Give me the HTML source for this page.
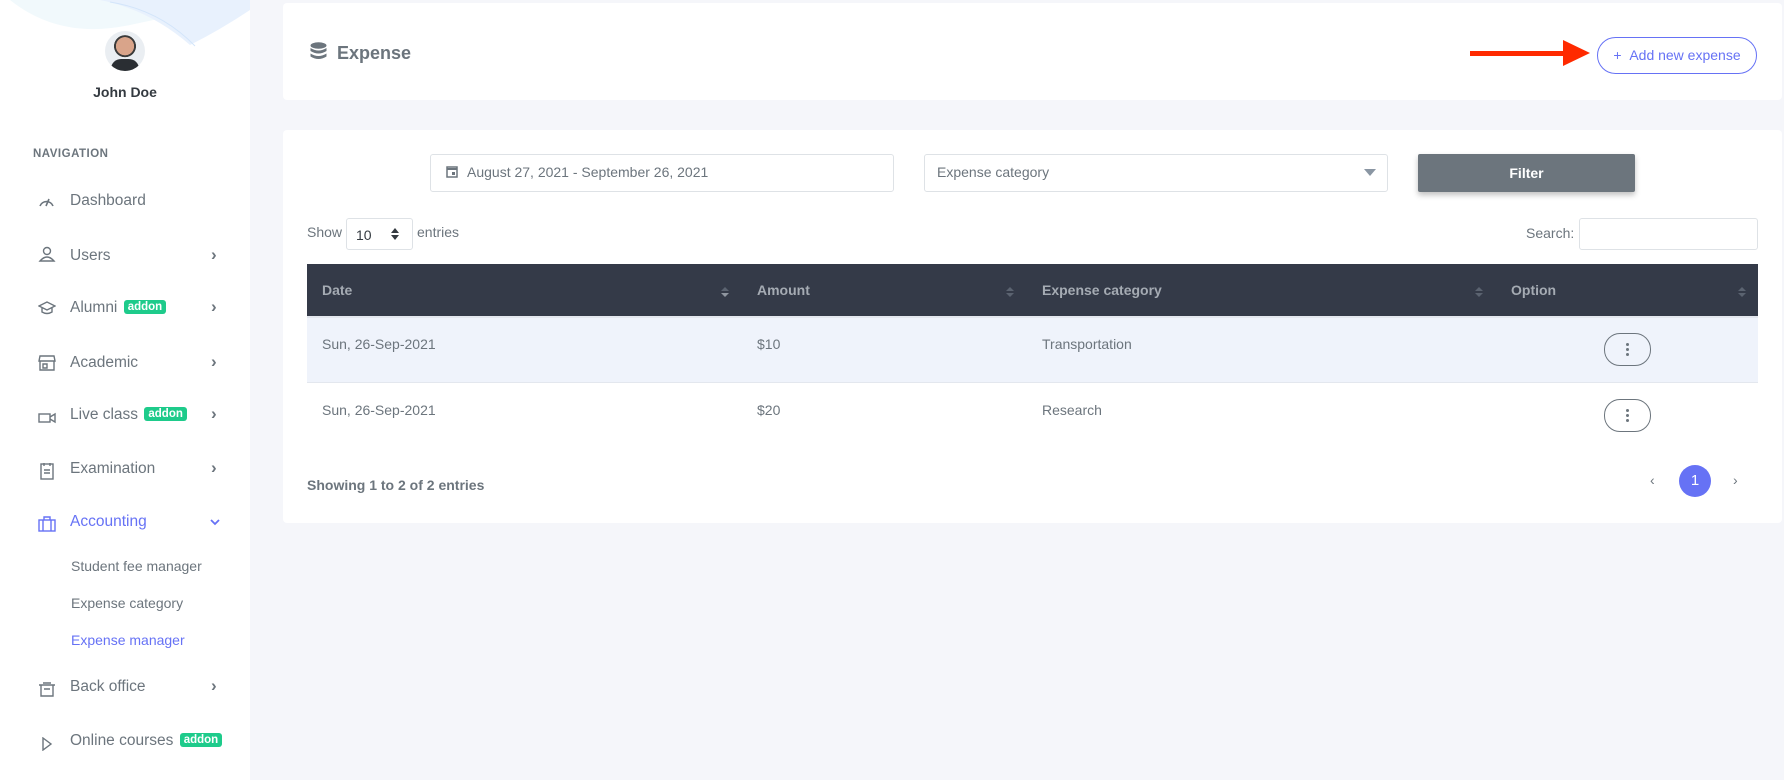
<!DOCTYPE html>
<html><head><meta charset="utf-8">
<style>
*{box-sizing:border-box;margin:0;padding:0}
body{width:1784px;height:776px;background:#f5f6fa;font-family:"Liberation Sans",sans-serif;position:relative;overflow:hidden;color:#6c757d}
.abs{position:absolute}
#side{left:3px;top:3px;width:250px;height:780px;background:#fff;overflow:hidden}
.nav{position:absolute;left:70px;font-size:15.5px;color:#6c757d;white-space:nowrap}
.ic{position:absolute;left:38px}
.chev{position:absolute;left:211px;font-size:17px;font-weight:bold;color:#6c757d}
.badge{display:inline-block;background:#1ecb8b;color:#fff;font-weight:bold;font-size:11.5px;padding:1px 4px;border-radius:3px;vertical-align:2px;margin-left:2px}
.sub{position:absolute;left:71px;font-size:14px;color:#6c757d}
.card{position:absolute;background:#fff;border-radius:4px}
.th{position:absolute;top:282px;font-size:14px;font-weight:bold;color:#a5abb3}
.td{position:absolute;font-size:14px;color:#6c757d}
.sort{position:absolute;top:286px;width:8px;height:12px}
.opt{position:absolute;left:1604px;width:47px;height:33px;border:1px solid #6c757d;border-radius:16px;background:transparent}
.opt i{position:absolute;left:21px;width:3px;height:3px;background:#6c757d;border-radius:50%}
</style></head><body>
<div id="side">
<svg class="abs" style="left:0;top:0" width="250" height="50" viewBox="0 0 250 50">
<path d="M10 0 Q60 40 130 25 T250 0 Z" fill="#f1f9fc"/>
<path d="M100 0 Q150 10 190 45 Q220 30 250 10 L250 0 Z" fill="#e8f1fd"/>
<path d="M110 2 Q160 10 195 46" stroke="#d3e5fa" fill="none"/>
</svg>
<div class="abs" style="left:105px;top:31px;width:40px;height:40px;border-radius:50%;background:radial-gradient(circle at 50% 38%,#d9a48a 0 28%,#3b3b3b 29% 34%,#eaeef2 35%);overflow:hidden"><div style="position:absolute;left:6px;top:28px;width:28px;height:14px;background:#2a2e33;border-radius:10px 10px 0 0"></div></div>
<div class="abs" style="left:0;width:250px;top:84px;text-align:center;font-weight:bold;font-size:14px;color:#343a40">John Doe</div>
<div class="abs" style="left:33px;top:148px;font-size:11.5px;font-weight:bold;letter-spacing:.5px;color:#6c757d">NAVIGATION</div>

<svg class="ic" style="top:194px" width="18" height="14" viewBox="0 0 18 14"><path d="M2 12 A7 7 0 0 1 15 12 M8 12 L11 5" stroke="#6c757d" stroke-width="1.6" fill="none"/></svg>
<div class="nav" style="top:192px">Dashboard</div>

<svg class="ic" style="top:245px" width="18" height="18" viewBox="0 0 18 18"><circle cx="9" cy="6" r="3.5" stroke="#6c757d" stroke-width="1.4" fill="none"/><path d="M2 16 Q9 8 16 16 Z" stroke="#6c757d" stroke-width="1.4" fill="none"/></svg>
<div class="nav" style="top:247px">Users</div><div class="chev" style="top:245px">›</div>

<svg class="ic" style="top:301px" width="18" height="14" viewBox="0 0 18 14"><path d="M1 5 L9 1 L17 5 L9 9 Z M4 7 V11 Q9 14 14 11 V7" stroke="#6c757d" stroke-width="1.4" fill="none"/></svg>
<div class="nav" style="top:299px">Alumni <span class="badge">addon</span></div><div class="chev" style="top:297px">›</div>

<svg class="ic" style="top:355px" width="18" height="16" viewBox="0 0 18 16"><path d="M2 1 H16 L17 6 H1 Z M2 6 V15 H16 V6 M5 9 H9 V13 H5 Z" stroke="#6c757d" stroke-width="1.4" fill="none"/></svg>
<div class="nav" style="top:354px">Academic</div><div class="chev" style="top:352px">›</div>

<svg class="ic" style="top:412px" width="18" height="12" viewBox="0 0 18 12"><rect x="1" y="2" width="11" height="8" stroke="#6c757d" stroke-width="1.4" fill="none"/><path d="M12 5 L17 2 V10 L12 7" stroke="#6c757d" stroke-width="1.4" fill="none"/></svg>
<div class="nav" style="top:406px">Live class <span class="badge">addon</span></div><div class="chev" style="top:404px">›</div>

<svg class="ic" style="top:462px" width="18" height="18" viewBox="0 0 18 18"><rect x="3" y="2" width="12" height="15" stroke="#6c757d" stroke-width="1.4" fill="none"/><path d="M6 1 V4 M12 1 V4 M6 8 H12 M6 11 H12" stroke="#6c757d" stroke-width="1.4"/></svg>
<div class="nav" style="top:460px">Examination</div><div class="chev" style="top:458px">›</div>

<svg class="ic" style="top:516px" width="18" height="16" viewBox="0 0 18 16"><rect x="1" y="4" width="16" height="11" stroke="#6672f5" stroke-width="1.4" fill="none"/><path d="M6 4 V1 H12 V4 M5 4 V15 M13 4 V15" stroke="#6672f5" stroke-width="1.4" fill="none"/></svg>
<div class="nav" style="top:513px;color:#6672f5">Accounting</div>
<svg class="abs" style="left:210px;top:519px" width="10" height="7" viewBox="0 0 10 7"><path d="M1 1 L5 5 L9 1" stroke="#6672f5" stroke-width="1.8" fill="none"/></svg>

<div class="sub" style="top:558px">Student fee manager</div>
<div class="sub" style="top:595px">Expense category</div>
<div class="sub" style="top:632px;color:#6672f5">Expense manager</div>

<svg class="ic" style="top:682px" width="18" height="16" viewBox="0 0 18 16"><path d="M1 3 H17 M3 3 V14 H15 V3 M6 7 H12 M5 1 H13" stroke="#6c757d" stroke-width="1.4" fill="none"/></svg>
<div class="nav" style="top:678px">Back office</div><div class="chev" style="top:676px">›</div>

<svg class="ic" style="top:737px" width="18" height="14" viewBox="0 0 18 14"><path d="M5 1 L13 7 L5 13 Z" stroke="#6c757d" stroke-width="1.4" fill="none"/></svg>
<div class="nav" style="top:732px">Online courses <span class="badge">addon</span></div>
</div>

<div class="card" style="left:283px;top:3px;width:1499px;height:97px"></div>
<svg class="abs" style="left:310px;top:42px" width="17" height="19" viewBox="0 0 17 19"><ellipse cx="8.5" cy="3.5" rx="8" ry="3.2" fill="#6c757d"/><path d="M0.5 6 Q8.5 11 16.5 6 V9 Q8.5 14 0.5 9 Z M0.5 11.5 Q8.5 16.5 16.5 11.5 V14.5 Q8.5 19.5 0.5 14.5 Z" fill="#6c757d"/></svg>
<div class="abs" style="left:337px;top:43px;font-size:18px;font-weight:bold;color:#6c757d">Expense</div>
<div class="abs" style="left:1470px;top:51px;width:95px;height:5px;background:#ff2a00"></div>
<svg class="abs" style="left:1563px;top:40px" width="27" height="26" viewBox="0 0 27 26"><path d="M0 0 L27 13 L0 26 Z" fill="#ff2a00"/></svg>
<div class="abs" style="left:1597px;top:37px;width:160px;height:37px;border:1px solid #6672f5;border-radius:19px;color:#6672f5;font-size:14px;text-align:center;line-height:35px">+ &nbsp;Add new expense</div>

<div class="card" style="left:283px;top:130px;width:1499px;height:393px"></div>
<div class="abs" style="left:430px;top:154px;width:464px;height:38px;border:1px solid #dee2e6;border-radius:3px;background:#fff"></div>
<svg class="abs" style="left:446px;top:165px" width="12" height="13" viewBox="0 0 12 13"><rect x="1" y="2" width="10" height="10" stroke="#6c757d" stroke-width="1.5" fill="none"/><rect x="6" y="7" width="3" height="3" fill="#6c757d"/><path d="M1 4 H11" stroke="#6c757d" stroke-width="2"/></svg>
<div class="abs" style="left:467px;top:164px;font-size:14px;color:#6c757d">August 27, 2021 - September 26, 2021</div>
<div class="abs" style="left:924px;top:154px;width:464px;height:38px;border:1px solid #dee2e6;border-radius:3px;background:#fff"></div>
<div class="abs" style="left:937px;top:164px;font-size:14px;color:#6c757d">Expense category</div>
<svg class="abs" style="left:1364px;top:169px" width="12" height="7"><path d="M0 0 H12 L6 7 Z" fill="#8a96a3"/></svg>
<div class="abs" style="left:1418px;top:154px;width:217px;height:38px;background:#6c757d;border-radius:2px;box-shadow:0 3px 6px rgba(0,0,0,.25);color:#fff;font-weight:bold;font-size:14px;text-align:center;line-height:38px">Filter</div>

<div class="abs" style="left:307px;top:224px;font-size:14px">Show</div>
<div class="abs" style="left:346px;top:218px;width:67px;height:32px;border:1px solid #dee2e6;border-radius:3px;background:#fff;font-size:14px;color:#343a40;padding:8px 0 0 9px">10</div>
<svg class="abs" style="left:391px;top:228px" width="8" height="12"><path d="M0 5 L4 0 L8 5 Z M0 7 L4 12 L8 7 Z" fill="#343a40"/></svg>
<div class="abs" style="left:417px;top:224px;font-size:14px">entries</div>
<div class="abs" style="left:1526px;top:225px;font-size:14px">Search:</div>
<div class="abs" style="left:1579px;top:218px;width:179px;height:32px;border:1px solid #dee2e6;border-radius:3px;background:#fff"></div>

<div class="abs" style="left:307px;top:264px;width:1451px;height:53px;background:#343a48"></div>
<div class="abs" style="left:307px;top:316px;width:1451px;height:2px;background:#e3e7ee"></div>
<div class="abs" style="left:307px;top:318px;width:1451px;height:64px;background:#eff3fb"></div>
<div class="abs" style="left:307px;top:382px;width:1451px;height:1px;background:#e3e7ee"></div>
<div class="th" style="left:322px">Date</div>
<div class="th" style="left:757px">Amount</div>
<div class="th" style="left:1042px">Expense category</div>
<div class="th" style="left:1511px">Option</div>
<svg class="sort" style="left:721px"><path d="M0 5 L4 1 L8 5 Z" fill="#5b6370"/><path d="M0 7 L4 11 L8 7 Z" fill="#8f96a0"/></svg>
<svg class="sort" style="left:1006px"><path d="M0 5 L4 1 L8 5 Z M0 7 L4 11 L8 7 Z" fill="#5b6370"/></svg>
<svg class="sort" style="left:1475px"><path d="M0 5 L4 1 L8 5 Z M0 7 L4 11 L8 7 Z" fill="#5b6370"/></svg>
<svg class="sort" style="left:1738px"><path d="M0 5 L4 1 L8 5 Z M0 7 L4 11 L8 7 Z" fill="#5b6370"/></svg>

<div class="td" style="left:322px;top:336px">Sun, 26-Sep-2021</div>
<div class="td" style="left:757px;top:336px">$10</div>
<div class="td" style="left:1042px;top:336px">Transportation</div>
<div class="opt" style="top:333px"><i style="top:9px"></i><i style="top:14px"></i><i style="top:19px"></i></div>
<div class="td" style="left:322px;top:402px">Sun, 26-Sep-2021</div>
<div class="td" style="left:757px;top:402px">$20</div>
<div class="td" style="left:1042px;top:402px">Research</div>
<div class="opt" style="top:399px"><i style="top:9px"></i><i style="top:14px"></i><i style="top:19px"></i></div>

<div class="abs" style="left:307px;top:477px;font-size:14px;font-weight:bold;color:#6c757d">Showing 1 to 2 of 2 entries</div>
<div class="abs" style="left:1650px;top:472px;font-size:14px">‹</div>
<div class="abs" style="left:1679px;top:465px;width:32px;height:32px;border-radius:50%;background:#6672f5;color:#fff;font-size:15px;text-align:center;line-height:32px">1</div>
<div class="abs" style="left:1733px;top:472px;font-size:14px">›</div>
</body></html>
